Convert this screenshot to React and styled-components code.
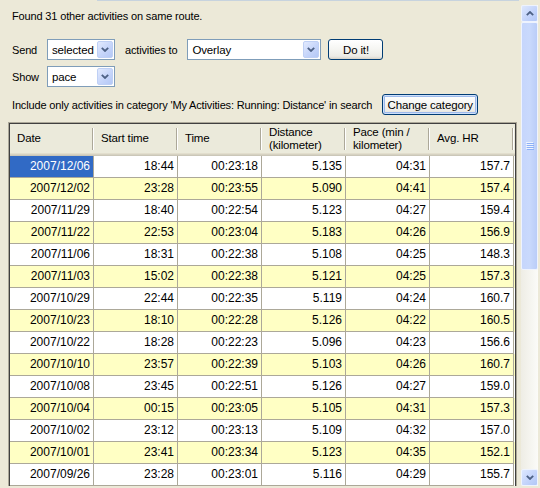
import React from "react";
import styled, { createGlobalStyle } from "styled-components";

const Global = createGlobalStyle`
  html, body { margin: 0; padding: 0; background: #ECE9D8; }
  * { box-sizing: border-box; }
`;

const Page = styled.div`
  display: flex;
  width: 540px;
  height: 488px;
  overflow: hidden;
  background: #ECE9D8;
  font-family: "Liberation Sans", Arial, sans-serif;
  font-size: 11px;
  letter-spacing: -0.15px;
  color: #000;
`;

const Main = styled.div`
  display: flex;
  flex-direction: column;
  width: 519px;
  flex: none;
`;

const Edge = styled.div`
  height: 1px;
  margin-left: 97px;
  background: #C7D3DE;
  flex: none;
`;

const Status = styled.div`
  margin: 9px 0 0 12px;
  line-height: 13px;
  white-space: nowrap;
`;

const FormRow = styled.div`
  display: flex;
  align-items: center;
  height: 21px;
  margin-top: ${(p) => p.$top}px;
  padding-left: 12px;
  white-space: nowrap;
  flex: none;
`;

const Label = styled.span`
  width: ${(p) => (p.$w ? `${p.$w}px` : "auto")};
  margin: ${(p) => p.$m || "0"};
`;

const Combo = styled.div`
  display: flex;
  align-items: center;
  width: ${(p) => p.$w}px;
  height: 21px;
  border: 1px solid #7F9DB9;
  background: #fff;
  padding: 1px;
`;

const ComboText = styled.span`
  flex: 1;
  padding-left: 3px;
  font-size: 11.5px;
`;

const DropButton = styled.div`
  width: 16px;
  height: 17px;
  border: 1px solid #BFD0F5;
  border-radius: 2px;
  background: linear-gradient(135deg, #E2EAFE 0%, #C6D5FA 55%, #B4C8F6 100%);
  display: flex;
  align-items: center;
  justify-content: center;
`;

const Button = styled.button`
  width: ${(p) => p.$w}px;
  height: 21px;
  margin-left: ${(p) => p.$ml}px;
  padding: 0;
  border: 1px solid #003C74;
  border-radius: 3px;
  background: linear-gradient(180deg, #FFFFFF 0%, #F6F6F3 45%, #ECEBE6 85%, #D8D4CA 100%);
  font-family: inherit;
  font-size: 11.5px;
  letter-spacing: -0.15px;
  color: #000;
  box-shadow: ${(p) =>
    p.$default ? "inset 0 0 0 1px #CEE0FA, inset 0 0 0 2px #9DB9EB" : "none"};
`;

const Frame = styled.div`
  margin: 7px 0 0 8px;
  width: 509px;
  height: 364px;
  border: 1px solid #ACA899;
  border-bottom: none;
  overflow: hidden;
  flex: none;
`;

const Sheet = styled.div`
  border: 1px solid #404040;
  border-bottom: none;
  background: #fff;
  min-height: 400px;
`;

const HeaderRow = styled.div`
  display: grid;
  grid-template-columns: repeat(6, 84px);
  height: 32px;
  background: linear-gradient(
    to top,
    #CBC7B8 0 1px,
    #D6D2C2 1px 2px,
    #E2DECD 2px 3px,
    #EBEADB 3px
  );
`;

const HeaderCell = styled.div`
  display: flex;
  align-items: center;
  padding: 0 6px 3px 7px;
  line-height: 13px;
  font-size: 11.5px;
  background:
    linear-gradient(#ACA899, #ACA899) right 1px top 4px / 1px 22px no-repeat,
    linear-gradient(#FFFFFF, #FFFFFF) right 0 top 4px / 1px 22px no-repeat;
`;

const Row = styled.div`
  display: grid;
  grid-template-columns: repeat(6, 84px);
  height: 22px;
  background: ${(p) => (p.$alt ? "#FFFFC4" : "#FFFFFF")};
`;

const Cell = styled.div`
  height: 22px;
  border-right: 1px solid #ACA899;
  border-bottom: 1px solid #ACA899;
  padding-right: 3px;
  text-align: right;
  line-height: 21px;
  font-size: 12px;
  letter-spacing: 0;
  white-space: nowrap;
  background: ${(p) => (p.$selected ? "#316AC5" : "transparent")};
  color: ${(p) => (p.$selected ? "#FFFFFF" : "#000")};
`;

const ScrollCol = styled.div`
  display: flex;
  flex-direction: column;
  width: 17px;
  height: 486px;
  margin-left: 2px;
  padding-top: 5px;
  flex: none;
`;

const ScrollBody = styled.div`
  flex: 1;
  display: flex;
  flex-direction: column;
  background: linear-gradient(to right, #EEEDE5, #FBFBF8);
`;

const ScrollButton = styled.div`
  width: 17px;
  height: 17px;
  flex: none;
  border: 1px solid #EEF3FE;
  border-radius: 2px;
  background: linear-gradient(135deg, #DDE7FE 0%, #C4D4FB 55%, #B2C7F7 100%);
  display: flex;
  align-items: center;
  justify-content: center;
`;

const Thumb = styled.div`
  height: 248px;
  flex: none;
  border: 1px solid #EEF3FE;
  border-radius: 2px;
  background: linear-gradient(to right, #C6D6FC 0%, #C9D9FC 50%, #BACDF8 100%);
  display: flex;
  align-items: center;
  justify-content: center;
`;

const Spacer = styled.div`
  flex: 1;
`;

const Chevron = ({ up }) => (
  <svg width="8" height="5" viewBox="0 0 8 5">
    <polyline
      points={up ? "0.8,4.2 4,1 7.2,4.2" : "0.8,0.8 4,4 7.2,0.8"}
      fill="none"
      stroke="#4D6185"
      strokeWidth="1.8"
    />
  </svg>
);

const Grip = () => (
  <svg width="8" height="8" viewBox="0 0 8 8">
    {[0, 2, 4, 6].map((y) => (
      <g key={y}>
        <rect x="0" y={y} width="7" height="1" fill="#EEF4FE" />
        <rect x="1" y={y + 1} width="7" height="1" fill="#8CB0F8" />
      </g>
    ))}
  </svg>
);

const columns = [
  "Date",
  "Start time",
  "Time",
  "Distance (kilometer)",
  "Pace (min / kilometer)",
  "Avg. HR",
];

const rows = [
  ["2007/12/06", "18:44", "00:23:18", "5.135", "04:31", "157.7"],
  ["2007/12/02", "23:28", "00:23:55", "5.090", "04:41", "157.4"],
  ["2007/11/29", "18:40", "00:22:54", "5.123", "04:27", "159.4"],
  ["2007/11/22", "22:53", "00:23:04", "5.183", "04:26", "156.9"],
  ["2007/11/06", "18:31", "00:22:38", "5.108", "04:25", "148.3"],
  ["2007/11/03", "15:02", "00:22:38", "5.121", "04:25", "157.3"],
  ["2007/10/29", "22:44", "00:22:35", "5.119", "04:24", "160.7"],
  ["2007/10/23", "18:10", "00:22:28", "5.126", "04:22", "160.5"],
  ["2007/10/22", "18:28", "00:22:23", "5.096", "04:23", "156.6"],
  ["2007/10/10", "23:57", "00:22:39", "5.103", "04:26", "160.7"],
  ["2007/10/08", "23:45", "00:22:51", "5.126", "04:27", "159.0"],
  ["2007/10/04", "00:15", "00:23:05", "5.105", "04:31", "157.3"],
  ["2007/10/02", "23:12", "00:23:13", "5.109", "04:32", "157.0"],
  ["2007/10/01", "23:41", "00:23:34", "5.123", "04:35", "152.1"],
  ["2007/09/26", "23:28", "00:23:01", "5.116", "04:29", "155.7"],
];

export default function App() {
  return (
    <>
      <Global />
      <Page>
        <Main>
          <Edge />
          <Status>Found 31 other activities on same route.</Status>
          <FormRow $top={16}>
            <Label $w={35}>Send</Label>
            <Combo $w={68}>
              <ComboText>selected</ComboText>
              <DropButton>
                <Chevron />
              </DropButton>
            </Combo>
            <Label $m="0 10px">activities to</Label>
            <Combo $w={134}>
              <ComboText>Overlay</ComboText>
              <DropButton>
                <Chevron />
              </DropButton>
            </Combo>
            <Button $w={55} $ml={7}>Do it!</Button>
          </FormRow>
          <FormRow $top={6}>
            <Label $w={35}>Show</Label>
            <Combo $w={68}>
              <ComboText>pace</ComboText>
              <DropButton>
                <Chevron />
              </DropButton>
            </Combo>
          </FormRow>
          <FormRow $top={7}>
            <Label>
              Include only activities in category 'My Activities: Running: Distance' in search
            </Label>
            <Button $w={96} $ml={10} $default>
              Change category
            </Button>
          </FormRow>
          <Frame>
            <Sheet>
              <HeaderRow>
                {columns.map((c) => (
                  <HeaderCell key={c}>{c}</HeaderCell>
                ))}
              </HeaderRow>
              {rows.map((r, i) => (
                <Row key={i} $alt={i % 2 === 1}>
                  {r.map((v, j) => (
                    <Cell key={j} $selected={i === 0 && j === 0}>
                      {v}
                    </Cell>
                  ))}
                </Row>
              ))}
            </Sheet>
          </Frame>
        </Main>
        <ScrollCol>
          <ScrollBody>
            <ScrollButton>
              <Chevron up />
            </ScrollButton>
            <Thumb>
              <Grip />
            </Thumb>
            <Spacer />
            <ScrollButton>
              <Chevron />
            </ScrollButton>
          </ScrollBody>
        </ScrollCol>
      </Page>
    </>
  );
}
